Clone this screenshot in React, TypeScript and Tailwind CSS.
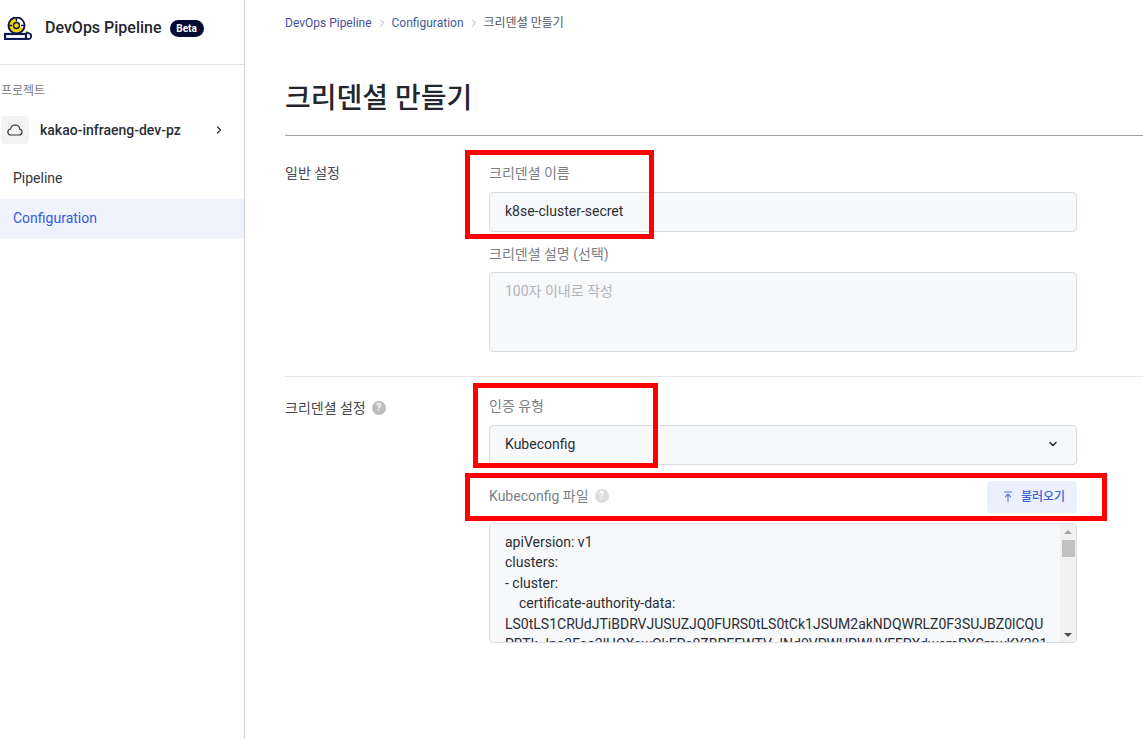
import React from 'react';
import { ChevronRight, ChevronDown } from 'lucide-react';

const font = "font-['Roboto','Noto_Sans_CJK_KR',sans-serif]";

const Logo = () => (
  <svg width="28" height="23" viewBox="0 0 28 23" fill="none">
    <circle cx="12.5" cy="8.500" r="8" fill="#f5d400" stroke="#0b1a4f" strokeWidth="2" />
    <path d="M12.500 1.500a7 7 0 0 1 6.500 9.500l-6.500-2.500z" fill="#fff" />
    <circle cx="12.500" cy="8.500" r="3" fill="#f5d400" stroke="#0b1a4f" strokeWidth="1.400" />
    <path d="M12.500 0.500v4M4.500 8.500h3.500M17 8.500h3.500" stroke="#0b1a4f" strokeWidth="1.400" />
    <rect x="1" y="17" width="21" height="5" fill="#fff" stroke="#0b1a4f" strokeWidth="2.200" />
    <path d="M21 22h3.500a2.800 2.800 0 0 0 1-5.400L22 15" stroke="#0b1a4f" strokeWidth="1.800" />
  </svg>
);

const Cloud = () => (
  <svg width="16" height="12" viewBox="0 0 16 12" fill="none" stroke="#33363d" strokeWidth="1.200">
    <path d="M4 11h8a3 3 0 0 0 .8-5.900A4.700 4.700 0 0 0 8.200 1a4.600 4.600 0 0 0-4.500 4A3 3 0 0 0 4 11z" />
  </svg>
);

const Help = ({ light }: { light?: boolean }) => (
  <span className={`inline-flex h-[14px] w-[14px] items-center justify-center rounded-full text-[10px] font-bold leading-none text-white ${light ? 'bg-[#dddddd]' : 'bg-[#bdbdbd]'}`}>
    ?
  </span>
);

const UploadIcon = () => (
  <svg width="10" height="12" viewBox="0 0 10 12" fill="none" stroke="#5b7be8" strokeWidth="1.200">
    <path d="M1 1h8M5 11V3.500M2.200 6L5 3.200 7.800 6" />
  </svg>
);

const Label = ({ children }: { children: React.ReactNode }) => (
  <div className="flex h-5 items-center text-sm text-[#7c7f86]">{children}</div>
);

const boxClass = 'rounded border border-[#d8dbe3] bg-[#f7f8fa] text-sm text-[#2b2e35]';

const App: React.FC = () => {
  return (
    <div className={`${font} relative flex h-[739px] w-[1143px] overflow-hidden bg-white`}>
      {/* Sidebar */}
      <aside className="h-full w-[245px] shrink-0 border-r border-[#d6d6d6]">
        <div className="flex h-[65px] items-center border-b border-[#e3e3e3] pb-[8px] pl-1">
          <span className="flex"><Logo /></span>
          <span className="ml-[13px] text-base font-medium text-[#23262d]">DevOps Pipeline</span>
          <span className="ml-2 flex h-[17px] w-[34px] items-center justify-center rounded-full bg-[#060b33] text-[10px] font-bold text-white">Beta</span>
        </div>
        <div className="flex h-[51px] items-center pt-[1px] pl-[1px] text-xs text-[#777a80]">프로젝트</div>
        <div className="flex h-[28px] items-center pl-[1px]">
          <span className="flex h-[28px] w-[28px] items-center justify-center rounded bg-[#f3f3f3]">
            <Cloud />
          </span>
          <span className="ml-[11px] text-sm font-medium text-[#2b2e35]">kakao-infraeng-dev-pz</span>
          <ChevronRight className="ml-[32px] h-3 w-3 text-[#2b2e35]" strokeWidth={2.5} />
        </div>
        <nav className="mt-[15px]">
          <div className="flex h-10 items-center pb-[2px] pl-[13px] text-sm text-[#33363d]">Pipeline</div>
          <div className="flex h-10 items-center bg-[#eef3fd] pb-[2px] pl-[13px] text-sm text-[#3659e3]">Configuration</div>
        </nav>
      </aside>

      {/* Main */}
      <main className="min-w-0 flex-1 pl-10">
        <div className="flex h-[45px] items-center text-xs">
          <span className="text-[#4a4f9c]">DevOps Pipeline</span>
          <ChevronRight className="mx-[4px] h-3 w-3 text-[#a8abb2]" />
          <span className="text-[#3f5a9c]">Configuration</span>
          <ChevronRight className="mx-[4px] h-3 w-3 text-[#a8abb2]" />
          <span className="text-[#55585f]">크리덴셜 만들기</span>
        </div>
        <h1 className="flex h-[91px] items-center border-b border-[#a3a3a3] pt-[17px] text-[28px] font-medium text-[#23262d]">크리덴셜 만들기</h1>

        <section className="flex h-[241px] border-b border-[#e6e6e6] pt-[27px]">
          <div className="flex h-5 w-[204px] items-center text-sm text-[#44474e]">일반 설정</div>
          <div className="w-[588px]">
            <Label>크리덴셜 이름</Label>
            <div className={`${boxClass} mt-[9px] flex h-10 items-center px-[15px] pb-[2px]`}>k8se-cluster-secret</div>
            <div className="mt-[12px]"><Label>크리덴셜 설명 (선택)</Label></div>
            <div className={`${boxClass} mt-[8px] h-[80px] px-[15px] pt-2 !text-[#b1b4ba]`}>100자 이내로 작성</div>
          </div>
        </section>

        <section className="flex pt-[21px]">
          <div className="flex h-5 w-[204px] items-center gap-[6px] text-sm text-[#44474e]">
            크리덴셜 설정 <Help />
          </div>
          <div className="-mt-[2px] w-[588px]">
            <Label>인증 유형</Label>
            <div className={`${boxClass} mt-[9px] flex h-10 items-center justify-between pb-[2px] pl-[15px] pr-[17px]`}>
              Kubeconfig
              <ChevronDown className="h-3 w-3 text-[#23262d]" strokeWidth={3} />
            </div>
            <div className="mt-[16px] flex h-8 items-center justify-between">
              <div className="flex items-center gap-[6px] pb-[2px] text-sm text-[#7c7f86]">Kubeconfig 파일 <Help light /></div>
              <button className="flex h-8 w-[90px] items-center justify-start gap-[8px] rounded bg-[#ebf0fd] pl-4 text-xs font-medium text-[#4263d6]">
                <UploadIcon /> 불러오기
              </button>
            </div>
            <div className={`${boxClass} mt-[10px] flex h-[120px] overflow-hidden`}>
              <div className="min-w-0 flex-1 overflow-hidden whitespace-nowrap pl-[15px] pt-[8px] leading-[20.4px]">
                <div>apiVersion: v1</div>
                <div>clusters:</div>
                <div>- cluster:</div>
                <div className="pl-[14px]">certificate-authority-data:</div>
                <div>LS0tLS1CRUdJTiBDRVJUSUZJQ0FURS0tLS0tCk1JSUM2akNDQWRLZ0F3SUJBZ0lCQU</div>
                <div>PBTk Jna3Fca2lHOXcwOkFPc0ZBPEFWTV JNd0VPWUPWUVFFPXdwcmPXSmwKY201</div>
              </div>
              <div className="flex w-[16px] shrink-0 flex-col items-center bg-[#f1f1f1] pt-[6px]">
                <span className="h-0 w-0 border-x-[4px] border-b-[4px] border-x-transparent border-b-[#a3a3a3]" />
                <span className="mt-[6px] h-[17px] w-[13px] bg-[#c1c1c1]" />
                <span className="mt-auto mb-[5px] h-0 w-0 border-x-[4px] border-t-[4px] border-x-transparent border-t-[#505050]" />
              </div>
            </div>
          </div>
        </section>
      </main>

      {/* Red annotation boxes drawn over the screenshot */}
      <div className="absolute left-[465px] top-[150px] h-[89px] w-[189px] border-[5px] border-[#ff0000]" />
      <div className="absolute left-[473px] top-[383px] h-[85px] w-[185px] border-[5px] border-[#ff0000]" />
      <div className="absolute left-[465px] top-[473px] h-[48px] w-[642px] border-[5px] border-[#ff0000]" />
    </div>
  );
};

export default App;
